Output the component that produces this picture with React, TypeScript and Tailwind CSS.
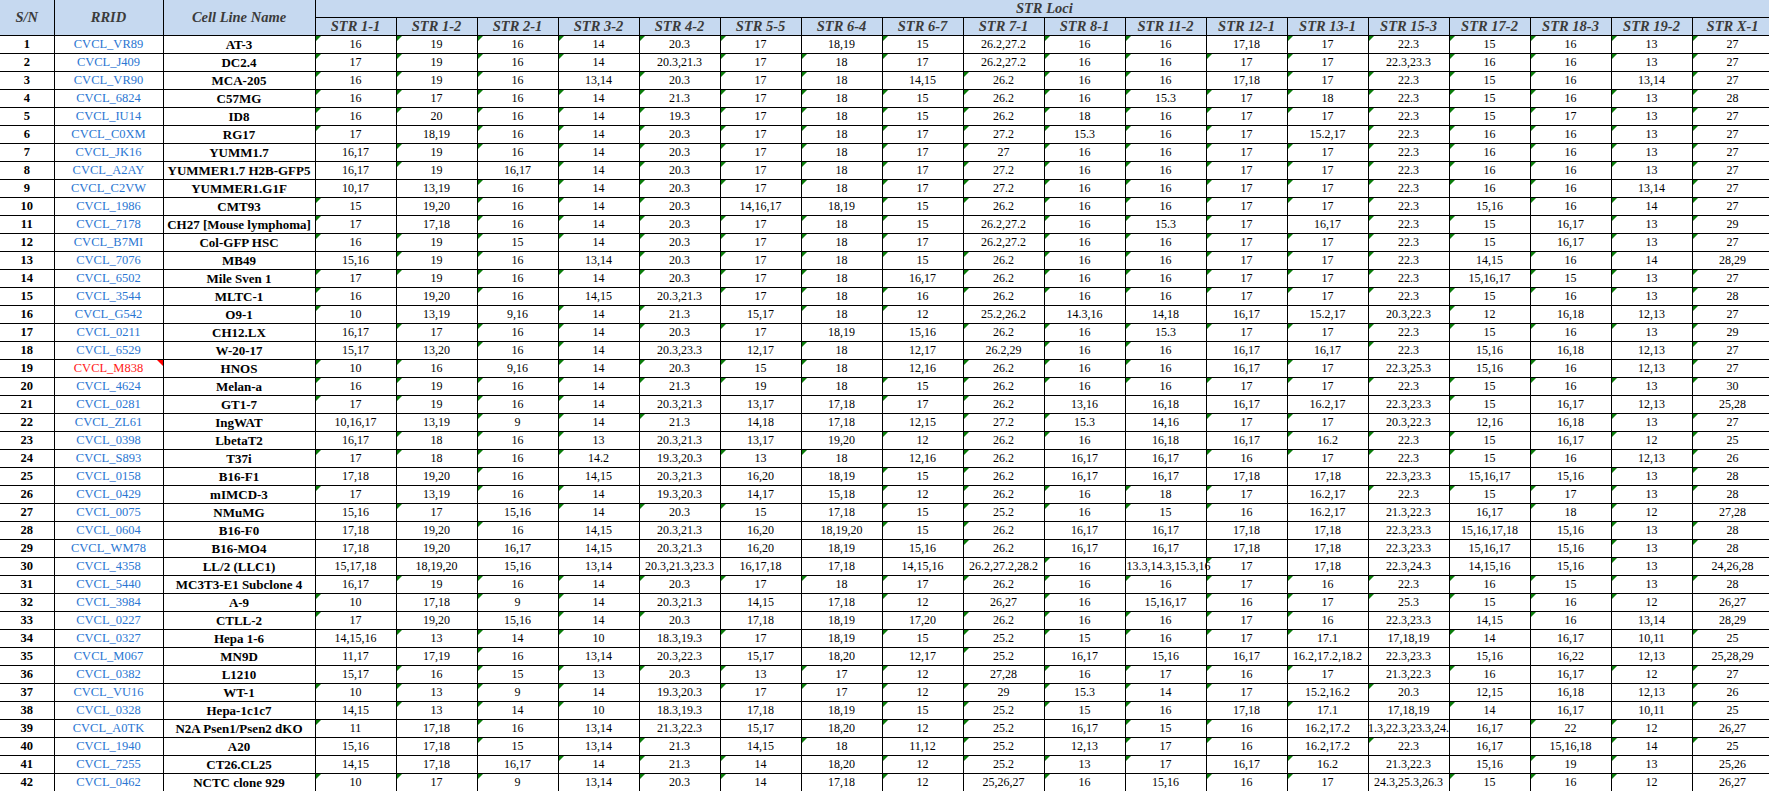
import React from "react"

const loci = ["1-1", "1-2", "2-1", "3-2", "4-2", "5-5", "6-4", "6-7", "7-1", "8-1", "11-2", "12-1", "13-1", "15-3", "17-2", "18-3", "19-2", "X-1"]

const raw = [
  "1|CVCL_VR89|AT-3|16|19|16|14|20.3|17|18,19|15|26.2,27.2|16|16|17,18|17|22.3|15|16|13|27",
  "2|CVCL_J409|DC2.4|17|19|16|14|20.3,21.3|17|18|17|26.2,27.2|16|16|17|17|22.3,23.3|16|16|13|27",
  "3|CVCL_VR90|MCA-205|16|19|16|13,14|20.3|17|18|14,15|26.2|16|16|17,18|17|22.3|15|16|13,14|27",
  "4|CVCL_6824|C57MG|16|17|16|14|21.3|17|18|15|26.2|16|15.3|17|18|22.3|15|16|13|28",
  "5|CVCL_IU14|ID8|16|20|16|14|19.3|17|18|15|26.2|18|16|17|17|22.3|15|17|13|27",
  "6|CVCL_C0XM|RG17|17|18,19|16|14|20.3|17|18|17|27.2|15.3|16|17|15.2,17|22.3|16|16|13|27",
  "7|CVCL_JK16|YUMM1.7|16,17|19|16|14|20.3|17|18|17|27|16|16|17|17|22.3|16|16|13|27",
  "8|CVCL_A2AY|YUMMER1.7 H2B-GFP5|16,17|19|16,17|14|20.3|17|18|17|27.2|16|16|17|17|22.3|16|16|13|27",
  "9|CVCL_C2VW|YUMMER1.G1F|10,17|13,19|16|14|20.3|17|18|17|27.2|16|16|17|17|22.3|16|16|13,14|27",
  "10|CVCL_1986|CMT93|15|19,20|16|14|20.3|14,16,17|18,19|15|26.2|16|16|17|17|22.3|15,16|16|14|27",
  "11|CVCL_7178|CH27 [Mouse lymphoma]|17|17,18|16|14|20.3|17|18|15|26.2,27.2|16|15.3|17|16,17|22.3|15|16,17|13|29",
  "12|CVCL_B7MI|Col-GFP HSC|16|19|15|14|20.3|17|18|17|26.2,27.2|16|16|17|17|22.3|15|16,17|13|27",
  "13|CVCL_7076|MB49|15,16|19|16|13,14|20.3|17|18|15|26.2|16|16|17|17|22.3|14,15|16|14|28,29",
  "14|CVCL_6502|Mile Sven 1|17|19|16|14|20.3|17|18|16,17|26.2|16|16|17|17|22.3|15,16,17|15|13|27",
  "15|CVCL_3544|MLTC-1|16|19,20|16|14,15|20.3,21.3|17|18|16|26.2|16|16|17|17|22.3|15|16|13|28",
  "16|CVCL_G542|O9-1|10|13,19|9,16|14|21.3|15,17|18|12|25.2,26.2|14.3,16|14,18|16,17|15.2,17|20.3,22.3|12|16,18|12,13|27",
  "17|CVCL_0211|CH12.LX|16,17|17|16|14|20.3|17|18,19|15,16|26.2|16|15.3|17|17|22.3|15|16|13|29",
  "18|CVCL_6529|W-20-17|15,17|13,20|16|14|20.3,23.3|12,17|18|12,17|26.2,29|16|16|16,17|16,17|22.3|15,16|16,18|12,13|27",
  "19|CVCL_M838|HNOS|10|16|9,16|14|20.3|15|18|12,16|26.2|16|16|16,17|17|22.3,25.3|15,16|16|12,13|27",
  "20|CVCL_4624|Melan-a|16|19|16|14|21.3|19|18|15|26.2|16|16|17|17|22.3|15|16|13|30",
  "21|CVCL_0281|GT1-7|17|19|16|14|20.3,21.3|13,17|17,18|17|26.2|13,16|16,18|16,17|16.2,17|22.3,23.3|15|16,17|12,13|25,28",
  "22|CVCL_ZL61|IngWAT|10,16,17|13,19|9|14|21.3|14,18|17,18|12,15|27.2|15.3|14,16|17|17|20.3,22.3|12,16|16,18|13|27",
  "23|CVCL_0398|LbetaT2|16,17|18|16|13|20.3,21.3|13,17|19,20|12|26.2|16|16,18|16,17|16.2|22.3|15|16,17|12|25",
  "24|CVCL_S893|T37i|17|18|16|14.2|19.3,20.3|13|18|12,16|26.2|16,17|16,17|16|17|22.3|15|16|12,13|26",
  "25|CVCL_0158|B16-F1|17,18|19,20|16|14,15|20.3,21.3|16,20|18,19|15|26.2|16,17|16,17|17,18|17,18|22.3,23.3|15,16,17|15,16|13|28",
  "26|CVCL_0429|mIMCD-3|17|13,19|16|14|19.3,20.3|14,17|15,18|12|26.2|16|18|17|16.2,17|22.3|15|17|13|28",
  "27|CVCL_0075|NMuMG|15,16|17|15,16|14|20.3|15|17,18|15|25.2|16|15|16|16.2,17|21.3,22.3|16,17|18|12|27,28",
  "28|CVCL_0604|B16-F0|17,18|19,20|16|14,15|20.3,21.3|16,20|18,19,20|15|26.2|16,17|16,17|17,18|17,18|22.3,23.3|15,16,17,18|15,16|13|28",
  "29|CVCL_WM78|B16-MO4|17,18|19,20|16,17|14,15|20.3,21.3|16,20|18,19|15,16|26.2|16,17|16,17|17,18|17,18|22.3,23.3|15,16,17|15,16|13|28",
  "30|CVCL_4358|LL/2 (LLC1)|15,17,18|18,19,20|15,16|13,14|20.3,21.3,23.3|16,17,18|17,18|14,15,16|26.2,27.2,28.2|16|13.3,14.3,15.3,16|17|17,18|22.3,24.3|14,15,16|15,16|13|24,26,28",
  "31|CVCL_5440|MC3T3-E1 Subclone 4|16,17|19|16|14|20.3|17|18|17|26.2|16|16|17|16|22.3|16|15|13|28",
  "32|CVCL_3984|A-9|10|17,18|9|14|20.3,21.3|14,15|17,18|12|26,27|16|15,16,17|16|17|25.3|15|16|12|26,27",
  "33|CVCL_0227|CTLL-2|17|19,20|15,16|14|20.3|17,18|18,19|17,20|26.2|16|16|17|16|22.3,23.3|14,15|16|13,14|28,29",
  "34|CVCL_0327|Hepa 1-6|14,15,16|13|14|10|18.3,19.3|17|18,19|15|25.2|15|16|17|17.1|17,18,19|14|16,17|10,11|25",
  "35|CVCL_M067|MN9D|11,17|17,19|16|13,14|20.3,22.3|15,17|18,20|12,17|25.2|16,17|15,16|16,17|16.2,17.2,18.2|22.3,23.3|15,16|16,22|12,13|25,28,29",
  "36|CVCL_0382|L1210|15,17|16|15|13|20.3|13|17|12|27,28|16|17|16|17|21.3,22.3|16|16,17|12|27",
  "37|CVCL_VU16|WT-1|10|13|9|14|19.3,20.3|17|17|12|29|15.3|14|17|15.2,16.2|20.3|12,15|16,18|12,13|26",
  "38|CVCL_0328|Hepa-1c1c7|14,15|13|14|10|18.3,19.3|17,18|18,19|15|25.2|15|16|17,18|17.1|17,18,19|14|16,17|10,11|25",
  "39|CVCL_A0TK|N2A Psen1/Psen2 dKO|11|17,18|16|13,14|21.3,22.3|15,17|18,20|12|25.2|16,17|15|16|16.2,17.2|21.3,22.3,23.3,24.3|16,17|22|12|26,27",
  "40|CVCL_1940|A20|15,16|17,18|15|13,14|21.3|14,15|18|11,12|25.2|12,13|17|16|16.2,17.2|22.3|16,17|15,16,18|14|25",
  "41|CVCL_7255|CT26.CL25|14,15|17,18|16,17|14|21.3|14|18,20|12|25.2|13|17|16,17|16.2|21.3,22.3|15,16|19|13|25,26",
  "42|CVCL_0462|NCTC clone 929|10|17|9|13,14|20.3|14|17,18|12|25,26,27|16|15,16|16|17|24.3,25.3,26.3|15|16|12|26,27",
]

const rows = raw.map((r) => r.split("|"))

// the one value that Excel lets spill into the next cell
const spills = "13.3,14.3,15.3,16"

function LocusCell({ value }: { value: string }) {
  const asNumber = !value.includes(",")
  return (
    <td className="relative border-r border-b border-black p-0">
      {asNumber && (
        <span className="absolute top-0 left-0 h-0 w-0 border-t-[5px] border-r-[5px] border-t-[#0a7d0a] border-r-transparent" />
      )}
      <div
        className={
          value === spills
            ? "flex h-[17px] items-center justify-start overflow-visible whitespace-nowrap pl-[1px]"
            : "flex h-[17px] items-center justify-center overflow-hidden whitespace-nowrap"
        }
      >
        {value}
      </div>
    </td>
  )
}

export default function App() {
  return (
    <div className="h-[791px] w-[1769px] overflow-hidden bg-white font-['Liberation_Serif','Times_New_Roman',serif] text-black">
      <table className="w-[1773px] table-fixed border-collapse text-[12px] leading-none">
        <colgroup>
          <col className="w-[54px]" />
          <col className="w-[109px]" />
          <col className="w-[152px]" />
          {loci.map((l) => (
            <col key={l} className="w-[81px]" />
          ))}
        </colgroup>
        <thead className="bg-[#c6d9f0] text-[14.5px] font-bold italic text-[#3b3b3b]">
          <tr className="h-[17px]">
            <th rowSpan={2} className="border-r border-b border-black p-0 font-bold">
              S/N
            </th>
            <th rowSpan={2} className="border-r border-b border-black p-0 font-bold">
              RRID
            </th>
            <th rowSpan={2} className="border-r border-b border-black p-0 font-bold">
              Cell Line Name
            </th>
            <th colSpan={18} className="border-b border-black p-0 font-bold">
              STR Loci
            </th>
          </tr>
          <tr className="h-[18px]">
            {loci.map((l) => (
              <th key={l} className="whitespace-nowrap border-r border-b border-black p-0 font-bold">
                STR {l}
              </th>
            ))}
          </tr>
        </thead>
        <tbody>
          {rows.map((r) => (
            <tr key={r[0]} className="h-[18px]">
              <td className="border-r border-b border-black p-0 text-center text-[12.5px] font-bold">{r[0]}</td>
              <td className="relative border-r border-b border-black p-0 text-center text-[12.5px]">
                {r[1] === "CVCL_M838" && (
                  <span className="absolute top-0 right-0 h-0 w-0 border-t-[6px] border-l-[6px] border-t-[#ff0000] border-l-transparent" />
                )}
                <span className={r[1] === "CVCL_M838" ? "text-[#ff1a1a]" : "text-[#2a76d2]"}>{r[1]}</span>
              </td>
              <td className="whitespace-nowrap border-r border-b border-black p-0 text-center text-[13px] font-bold">
                {r[2]}
              </td>
              {r.slice(3).map((v, i) => (
                <LocusCell key={i} value={v} />
              ))}
            </tr>
          ))}
        </tbody>
      </table>
    </div>
  )
}
